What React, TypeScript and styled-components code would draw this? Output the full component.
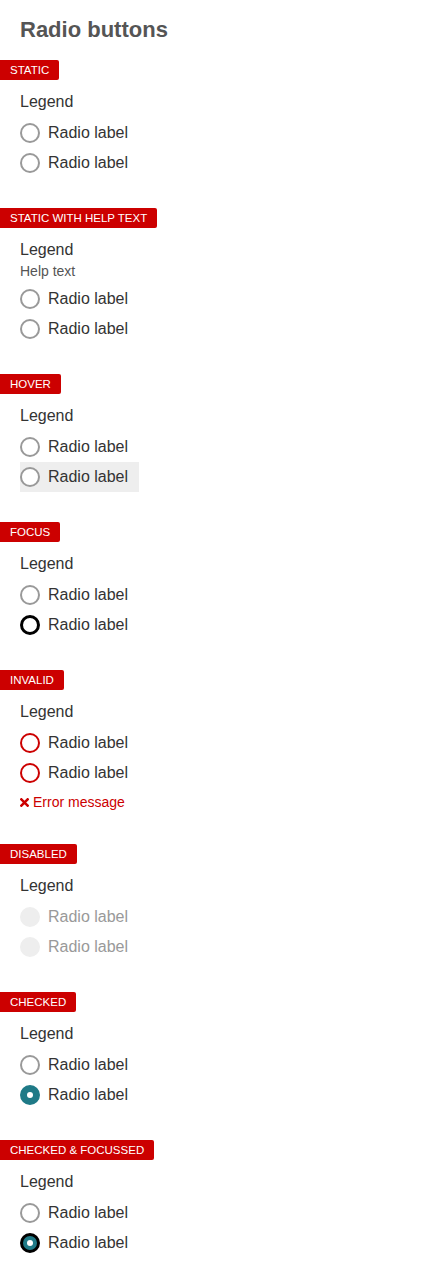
import React from "react";
import styled, {createGlobalStyle, css} from "styled-components";

const GlobalStyle = createGlobalStyle`
    body {
        margin: 0;
        background: #fff;
        font-family: "Liberation Sans", Arial, Helvetica, sans-serif;
        color: #333;
    }
`;

type RadioState = 'static' | 'hover' | 'focus' | 'invalid' | 'disabled' | 'checked' | 'checkedFocus';

const Page = styled.div`
    padding: 17px 0 20px;
`;

const Title = styled.h1`
    margin: 0 0 17px 20px;
    font-size: 22px;
    line-height: 26px;
    font-weight: 700;
    color: #555;
`;

const Section = styled.section`
    margin-bottom: 30px;
    &:last-child {
        margin-bottom: 0;
    }
`;

const Tag = styled.div`
    display: inline-block;
    height: 20px;
    line-height: 20px;
    padding: 0 10px;
    font-size: 11.5px;
    color: #fff;
    background: #c00;
    border-radius: 0 2px 2px 0;
    text-transform: uppercase;
    vertical-align: top;
`;

const Fieldset = styled.fieldset`
    border: 0;
    margin: 10px 0 0;
    padding: 0 0 0 20px;
    min-width: 0;
`;

const Legend = styled.legend`
    padding: 0;
    font-size: 16px;
    line-height: 24px;
    color: #333;
`;

const HelpText = styled.div`
    font-size: 14px;
    line-height: 18px;
    color: #555;
`;

const Options = styled.div`
    margin-top: 4px;
    display: flex;
    flex-direction: column;
    align-items: flex-start;
`;

const Row = styled.label<{hovered?: boolean; disabled?: boolean}>`
    display: flex;
    align-items: center;
    gap: 8px;
    height: 30px;
    padding-right: 11px;
    font-size: 16px;
    color: ${props => props.disabled ? '#999' : '#333'};
    background: ${props => props.hovered ? '#eee' : 'transparent'};
`;

const Circle = styled.span<{state: RadioState}>`
    box-sizing: border-box;
    width: 20px;
    height: 20px;
    border-radius: 50%;
    border: 2px solid #999;
    background: #fff;
    display: flex;
    align-items: center;
    justify-content: center;
    flex-shrink: 0;
    ${props => props.state === 'focus' && css`
        border: 3px solid #000;
    `}
    ${props => props.state === 'invalid' && css`
        border-color: #c00;
    `}
    ${props => props.state === 'disabled' && css`
        border-color: #eee;
        background: #eee;
    `}
    ${props => props.state === 'checked' && css`
        border-color: #1f7a87;
        background: #1f7a87;
    `}
    ${props => props.state === 'checkedFocus' && css`
        border: 3px solid #000;
        background: #1f7a87;
    `}
`;

const Dot = styled.span`
    width: 6px;
    height: 6px;
    border-radius: 50%;
    background: #fff;
`;

const ErrorMessage = styled.div`
    display: flex;
    align-items: center;
    gap: 4px;
    padding-top: 2px;
    font-size: 14px;
    line-height: 24px;
    color: #c00;
    svg {
        width: 9px;
        height: 9px;
    }
`;

interface RadioProps {
    state: RadioState;
    hovered?: boolean;
}

const Radio: React.FC<RadioProps> = ({state, hovered}) => (
    <Row hovered={hovered} disabled={state === 'disabled'}>
        <Circle state={state}>
            {(state === 'checked' || state === 'checkedFocus') && <Dot />}
        </Circle>
        Radio label
    </Row>
);

interface GroupProps {
    tag: string;
    first: RadioState;
    second: RadioState;
    help?: boolean;
    hover?: boolean;
    error?: boolean;
}

const Group: React.FC<GroupProps> = (props) => (
    <Section>
        <Tag>{props.tag}</Tag>
        <Fieldset>
            <Legend>Legend</Legend>
            {props.help && <HelpText>Help text</HelpText>}
            <Options>
                <Radio state={props.first} />
                <Radio state={props.second} hovered={props.hover} />
            </Options>
            {props.error && <ErrorMessage>
                <svg viewBox="0 0 10 10">
                    <path d="M1.5 1.5l7 7M8.5 1.5l-7 7" stroke="#c00" strokeWidth="2.8" strokeLinecap="square" />
                </svg>
                Error message
            </ErrorMessage>}
        </Fieldset>
    </Section>
);

const App: React.FC = () => {
    return <>
        <GlobalStyle />
        <Page>
            <Title>Radio buttons</Title>
            <Group tag="Static" first="static" second="static" />
            <Group tag="Static with help text" first="static" second="static" help />
            <Group tag="Hover" first="static" second="static" hover />
            <Group tag="Focus" first="static" second="focus" />
            <Group tag="Invalid" first="invalid" second="invalid" error />
            <Group tag="Disabled" first="disabled" second="disabled" />
            <Group tag="Checked" first="static" second="checked" />
            <Group tag="Checked & focussed" first="static" second="checkedFocus" />
        </Page>
    </>
}
export default App;
